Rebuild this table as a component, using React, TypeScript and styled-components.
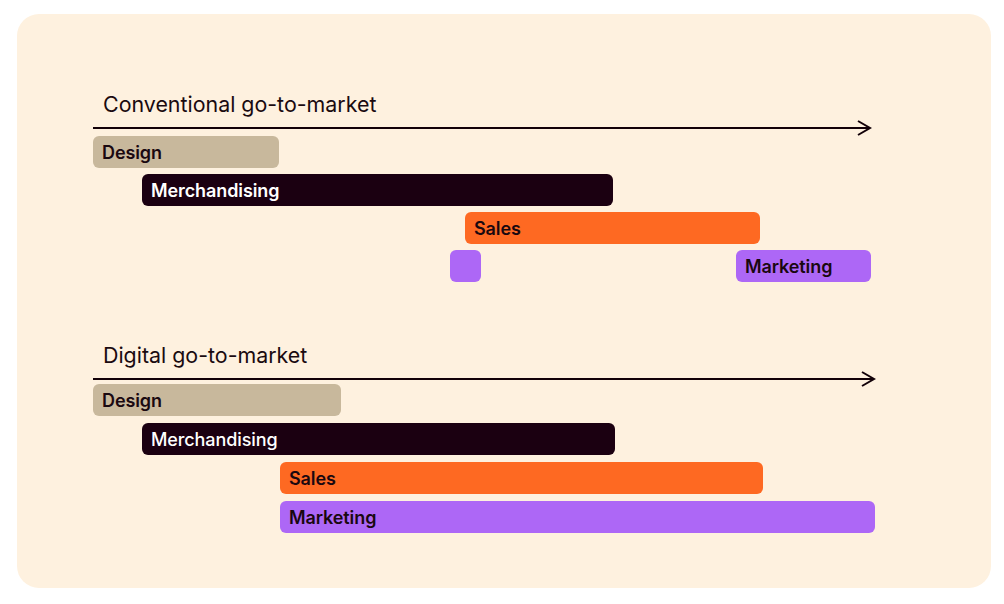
import React from "react"
import styled, { createGlobalStyle } from "styled-components"

const GlobalStyle = createGlobalStyle`
  html, body {
    margin: 0;
    padding: 0;
    background: #ffffff;
    font-family: Inter, "Noto Sans", "Liberation Sans", sans-serif;
  }
`

type Tone = "design" | "merch" | "sales" | "marketing"

const tones: Record<Tone, { bg: string; fg: string }> = {
  design: { bg: "#c8b89c", fg: "#1a0810" },
  merch: { bg: "#1b0011", fg: "#ffffff" },
  sales: { bg: "#fe6922", fg: "#1a0810" },
  marketing: { bg: "#ad67f6", fg: "#1a0810" },
}

const Card = styled.div`
  margin: 14px 0 0 17px;
  width: 974px;
  height: 574px;
  box-sizing: border-box;
  padding: 78px 0 0 76px;
  background: #fef1df;
  border-radius: 22px;
  display: flex;
  flex-direction: column;
`

const Section = styled.section<{ $top: number }>`
  display: flex;
  flex-direction: column;
  margin-top: ${(p) => p.$top}px;
`

const Title = styled.h2`
  margin: 0 0 4px 10px;
  font-size: 21.4px;
  line-height: 24px;
  font-weight: 400;
  color: #1a0a10;
`

const ArrowSvg = styled.svg<{ $after: number }>`
  display: block;
  margin-bottom: ${(p) => p.$after}px;
  overflow: visible;
`

const Rows = styled.div<{ $gap: number }>`
  display: flex;
  flex-direction: column;
  gap: ${(p) => p.$gap}px;
`

const Row = styled.div`
  display: flex;
  height: 32px;
`

const Bar = styled.div<{ $tone: Tone; $bold: boolean }>`
  flex: none;
  box-sizing: border-box;
  height: 32px;
  padding: 0 9px;
  display: flex;
  align-items: center;
  border-radius: 6px;
  background: ${(p) => tones[p.$tone].bg};
  color: ${(p) => tones[p.$tone].fg};
  font-size: 18px;
  font-weight: ${(p) => (p.$bold ? 600 : 500)};
  letter-spacing: -0.1px;
  white-space: nowrap;
`

interface Span {
  x: number
  w: number
  tone: Tone
  label?: string
  light?: boolean
}

interface Timeline {
  title: string
  top: number
  arrow: number
  after: number
  gap: number
  rows: Span[][]
}

const timelines: Timeline[] = [
  {
    title: "Conventional go-to-market",
    top: 0,
    arrow: 778,
    after: 0,
    gap: 6,
    rows: [
      [{ x: 0, w: 186, tone: "design", label: "Design" }],
      [{ x: 49, w: 471, tone: "merch", label: "Merchandising" }],
      [{ x: 372, w: 295, tone: "sales", label: "Sales" }],
      [
        { x: 357, w: 31, tone: "marketing" },
        { x: 643, w: 135, tone: "marketing", label: "Marketing" },
      ],
    ],
  },
  {
    title: "Digital go-to-market",
    top: 61,
    arrow: 782,
    after: -3,
    gap: 7,
    rows: [
      [{ x: 0, w: 248, tone: "design", label: "Design" }],
      [{ x: 49, w: 473, tone: "merch", label: "Merchandising", light: true }],
      [{ x: 187, w: 483, tone: "sales", label: "Sales" }],
      [{ x: 187, w: 595, tone: "marketing", label: "Marketing" }],
    ],
  },
]

const Arrow = ({ width, after }: { width: number; after: number }) => (
  <ArrowSvg width={width} height={16} viewBox={`0 0 ${width} 16`} $after={after}>
    <line x1={0} y1={8} x2={width - 1} y2={8} stroke="#120008" strokeWidth={2} />
    <polyline
      points={`${width - 13},1 ${width - 1},8 ${width - 13},15`}
      fill="none"
      stroke="#120008"
      strokeWidth={2}
    />
  </ArrowSvg>
)

const TimelineRow = ({ spans }: { spans: Span[] }) => {
  let end = 0
  return (
    <Row>
      {spans.map((s, i) => {
        const offset = s.x - end
        end = s.x + s.w
        return (
          <Bar
            key={i}
            $tone={s.tone}
            $bold={!s.light}
            style={{ marginLeft: offset, width: s.w }}
          >
            {s.label}
          </Bar>
        )
      })}
    </Row>
  )
}

const App = () => (
  <>
    <GlobalStyle />
    <Card>
      {timelines.map((t) => (
        <Section key={t.title} $top={t.top}>
          <Title>{t.title}</Title>
          <Arrow width={t.arrow} after={t.after} />
          <Rows $gap={t.gap}>
            {t.rows.map((r, i) => (
              <TimelineRow key={i} spans={r} />
            ))}
          </Rows>
        </Section>
      ))}
    </Card>
  </>
)

export default App
